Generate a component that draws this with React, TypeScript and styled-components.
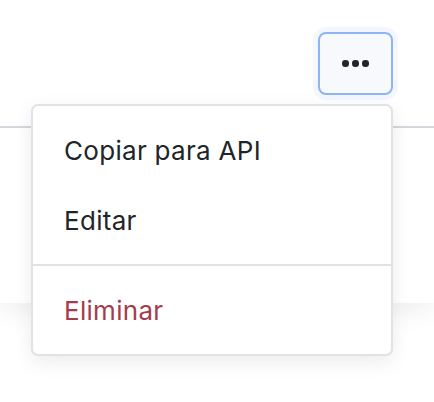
import styled, { createGlobalStyle } from 'styled-components';

const GlobalStyle = createGlobalStyle`
  html, body {
    margin: 0;
    padding: 0;
    background: #ffffff;
    font-family: Inter, "Noto Sans", "Liberation Sans", sans-serif;
    color: #212529;
  }
`

const Page = styled.div`
  width: 434px;
  height: 402px;
  overflow: hidden;
  display: flex;
  flex-direction: column;
`

const Header = styled.div`
  height: 128px;
  box-sizing: border-box;
  border-bottom: 2px solid #d6d9dd;
  display: flex;
  justify-content: flex-end;
  align-items: flex-start;
  padding: 32px 41px 0 0;
`

const Body = styled.div`
  height: 175px;
  background: #ffffff;
  box-shadow: 0 10px 22px rgba(20, 20, 40, 0.06);
`

const Actions = styled.div`
  position: relative;
`

const DotsButton = styled.button`
  width: 75px;
  height: 63px;
  box-sizing: border-box;
  border: 2px solid #8db5f6;
  border-radius: 8px;
  background: #f8f9fc;
  box-shadow: 0 0 0 5px rgba(100, 140, 255, 0.07);
  display: flex;
  align-items: center;
  justify-content: center;
  gap: 3.5px;
  padding: 0;
  cursor: pointer;
  span {
    width: 6.5px;
    height: 6.5px;
    border-radius: 50%;
    background: #212529;
  }
`

const Menu = styled.ul`
  position: absolute;
  top: 72px;
  right: 0;
  width: 362px;
  box-sizing: border-box;
  margin: 0;
  padding: 9px 0;
  list-style: none;
  background: #ffffff;
  border: 2px solid #e1e1e6;
  border-radius: 7px;
  box-shadow: 0 6px 20px rgba(0, 0, 0, 0.08);
  z-index: 10;
`

const Item = styled.li<{ $danger?: boolean }>`
  height: 70px;
  display: flex;
  align-items: center;
  padding: 0 31px;
  font-size: 26px;
  letter-spacing: 0.3px;
  color: ${p => (p.$danger ? '#a43c4b' : '#212529')};
  cursor: pointer;
`

const Divider = styled.li`
  height: 2px;
  margin: 9px 0;
  background: #e2e2e6;
`

export default function App() {
  return (
    <Page>
      <GlobalStyle />
      <Header>
        <Actions>
          <DotsButton aria-label="Más opciones">
            <span />
            <span />
            <span />
          </DotsButton>
          <Menu>
            <Item>Copiar para API</Item>
            <Item>Editar</Item>
            <Divider />
            <Item $danger>Eliminar</Item>
          </Menu>
        </Actions>
      </Header>
      <Body />
    </Page>
  )
}
